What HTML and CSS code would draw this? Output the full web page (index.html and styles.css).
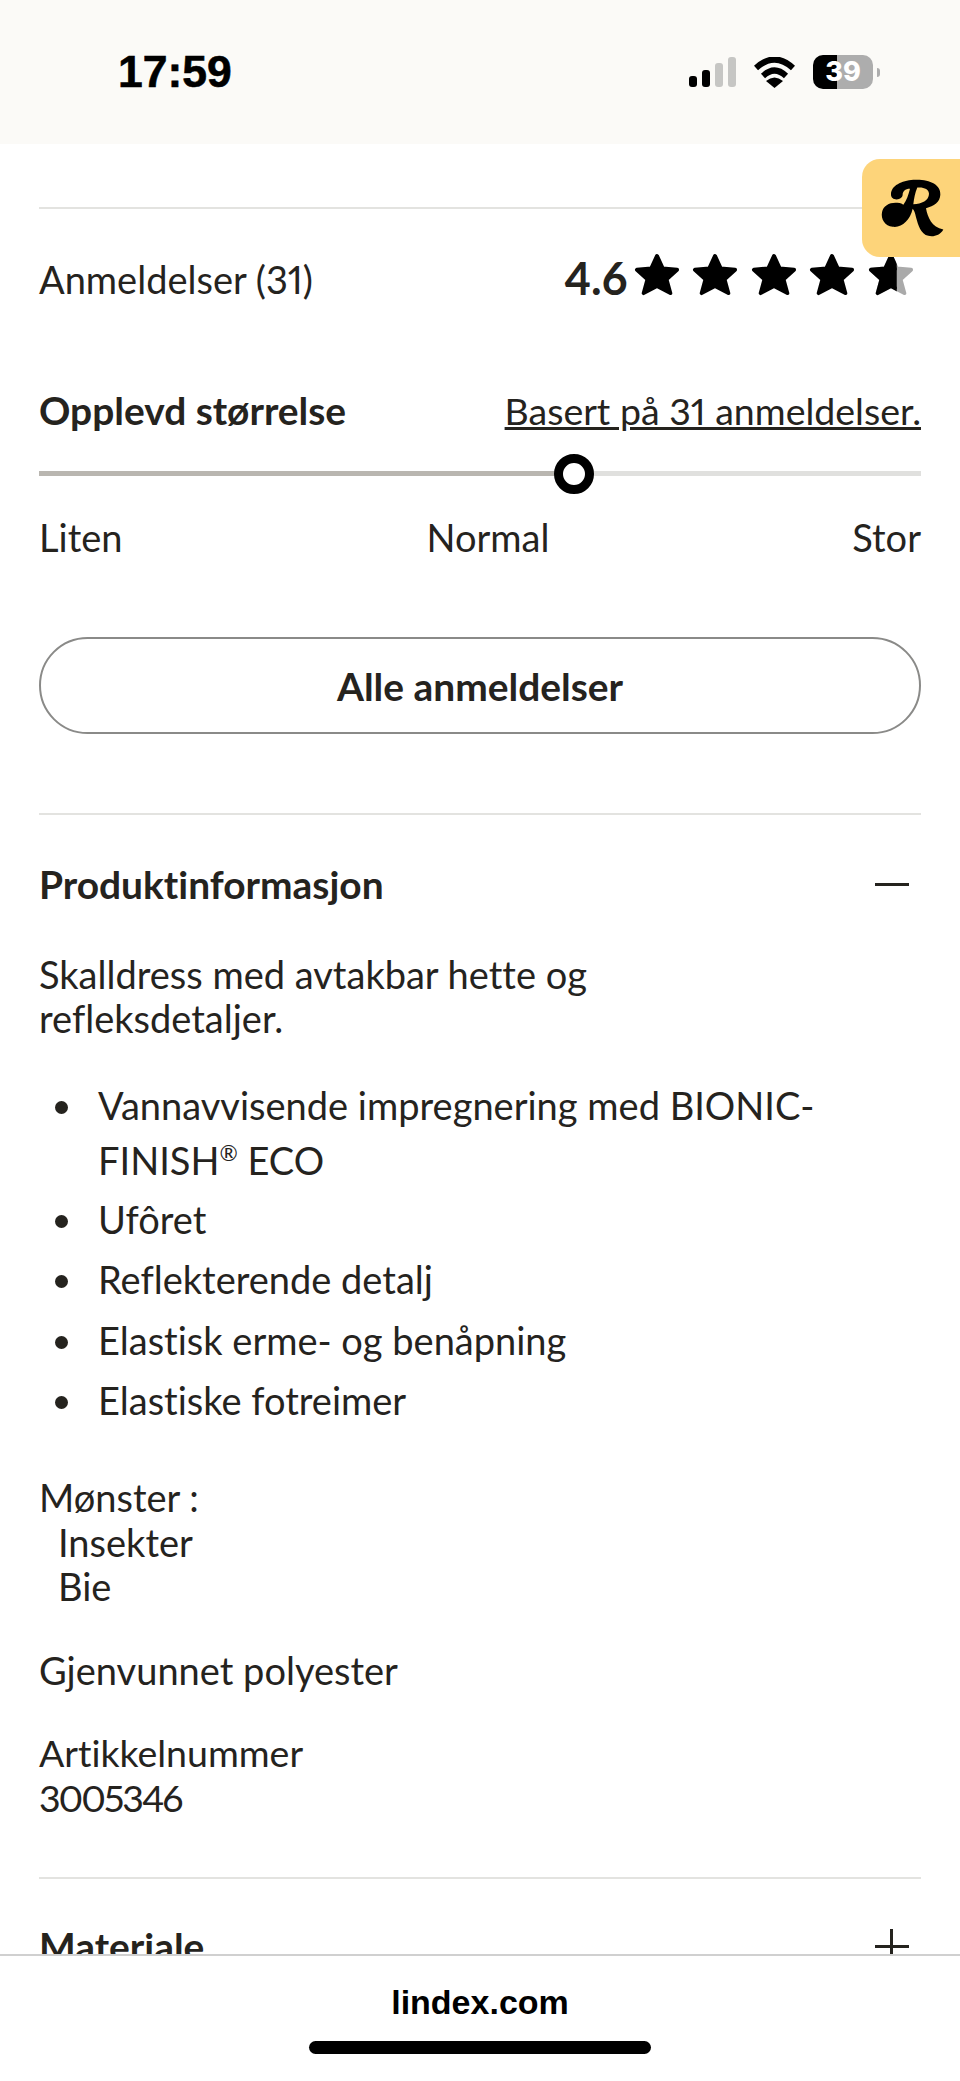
FILE: index.html
```html
<!DOCTYPE html>
<html lang="no">
<head>
    <meta charset="UTF-8">
    <meta name="viewport" content="width=device-width, initial-scale=1.0">
    <title>Lindex - Produkt</title>
    <link rel="stylesheet" href="styles.css">
</head>
<body>
    <header class="status-bar">
        <span class="clock">17:59</span>
        <div class="status-icons">
            <svg class="signal" width="47" height="30" viewBox="0 0 47 30">
                <rect x="0" y="19" width="8" height="11" rx="3" fill="#000"/>
                <rect x="13" y="13" width="8" height="17" rx="3" fill="#000"/>
                <rect x="26" y="6" width="8" height="24" rx="3" fill="#c6c6c4"/>
                <rect x="39" y="0" width="8" height="30" rx="3" fill="#c6c6c4"/>
            </svg>
            <svg class="wifi" width="41" height="31" viewBox="0 0 41 31">
                <path d="M2 11 Q20.5 -6 39 11" fill="none" stroke="#000" stroke-width="6"/>
                <path d="M9 19 Q20.5 8 32 19" fill="none" stroke="#000" stroke-width="6"/>
                <path d="M20.5 31 L12 24 Q20.5 17 29 24 Z" fill="#000"/>
            </svg>
            <div class="battery">
                <span class="battery-level">39</span>
            </div>
            <span class="battery-tip"></span>
        </div>
    </header>

    <a class="reviews-badge" href="#">
        <svg width="65" height="62" viewBox="60 65 195 185">
            <path fill-rule="evenodd" d="M93 118 C93 90 125 76 160 73 C205 70 243 85 241 118 C240 140 222 152 198 158 C203 185 215 215 250 222 C240 240 220 245 205 241 C182 235 175 210 168 185 C165 172 163 165 158 160 C150 195 125 218 98 214 C75 212 62 190 66 170 C70 150 90 140 112 142 C122 142 128 146 130 148 C140 135 145 118 150 100 C135 100 128 108 128 118 C128 125 120 132 110 132 C100 132 93 126 93 118 Z M172 96 C165 112 162 130 160 146 C185 146 207 135 207 115 C207 100 190 94 172 96 Z"/>
        </svg>
    </a>

    <svg class="defs" width="0" height="0">
        <defs>
            <symbol id="star" viewBox="0 0 50 46">
                <path d="M25 3 L31 16 L46 17.5 L35 27.5 L39 42 L25 34.5 L11 42 L15 27.5 L4 17.5 L19 16 Z" fill="currentColor" stroke="currentColor" stroke-width="4" stroke-linejoin="round"/>
            </symbol>
            <clipPath id="star-left"><rect x="0" y="0" width="31" height="46"/></clipPath>
        </defs>
    </svg>

    <main class="page">
        <section class="reviews">
            <div class="rating-row">
                <span class="rating-label">Anmeldelser (31)</span>
                <div class="rating">
                    <strong class="rating-value">4.6</strong>
                    <div class="stars">
                        <svg width="48" height="44"><use href="#star"/></svg>
                        <svg width="48" height="44"><use href="#star"/></svg>
                        <svg width="48" height="44"><use href="#star"/></svg>
                        <svg width="48" height="44"><use href="#star"/></svg>
                        <svg width="48" height="44" viewBox="0 0 50 46">
                            <use href="#star" class="star-empty"/>
                            <use href="#star" clip-path="url(#star-left)"/>
                        </svg>
                    </div>
                </div>
            </div>

            <div class="size-head">
                <h3>Opplevd størrelse</h3>
                <a href="#">Basert på 31 anmeldelser.</a>
            </div>
            <div class="size-track">
                <span class="size-fill"></span>
                <span class="size-knob"></span>
            </div>
            <div class="size-labels">
                <span>Liten</span>
                <span class="size-normal">Normal</span>
                <span>Stor</span>
            </div>

            <a class="all-reviews" href="#">Alle anmeldelser</a>
        </section>

        <section class="accordion">
            <div class="accordion-head">
                <h2>Produktinformasjon</h2>
                <span class="minus"></span>
            </div>
            <p class="intro">Skalldress med avtakbar hette og<br>refleksdetaljer.</p>
            <ul class="features">
                <li>Vannavvisende impregnering med BIONIC-FINISH<sup>®</sup> ECO</li>
                <li>Ufôret</li>
                <li>Reflekterende detalj</li>
                <li>Elastisk erme- og benåpning</li>
                <li>Elastiske fotreimer</li>
            </ul>
            <p class="pattern">Mønster :<br><span class="indent">Insekter</span><br><span class="indent">Bie</span></p>
            <p class="recycled">Gjenvunnet polyester</p>
            <p class="article">Artikkelnummer<br><span class="article-number">3005346</span></p>
        </section>

        <section class="accordion">
            <div class="accordion-head">
                <h2>Materiale</h2>
                <span class="plus"></span>
            </div>
        </section>
    </main>

    <footer class="url-bar">
        <span class="url">lindex.com</span>
        <span class="home-bar"></span>
    </footer>
</body>
</html>
```

FILE: styles.css
```css
/* General */
html, body {
    height: 2081px;
}

body {
    position: relative;
    margin: 0;
    overflow: hidden;
    background: #fff;
    color: #25231e;
    font-family: 'Lato', sans-serif;
    font-size: 38px;
    font-variant-ligatures: none;
    font-variant-numeric: proportional-nums;
    line-height: 44px;
}

a {
    color: inherit;
}

h2, h3, p, ul {
    margin: 0;
}

h2, h3 {
    font-size: 38.9px;
    font-weight: 700;
}

.defs {
    display: block;
}

/* Phone status bar */
.status-bar {
    display: flex;
    justify-content: space-between;
    align-items: center;
    box-sizing: border-box;
    height: 144px;
    padding: 0 80px 0 118px;
    background: #fbfaf7;
}

.clock {
    color: #000;
    font-family: 'Liberation Sans', sans-serif;
    font-size: 44.5px;
    font-weight: bold;
    -webkit-text-stroke: 0.6px #000;
}

.status-icons {
    display: flex;
    align-items: center;
}

.signal {
    margin-right: 18px;
}

.wifi {
    margin-right: 18px;
}

.battery {
    width: 60px;
    height: 34px;
    border-radius: 10px;
    background: linear-gradient(90deg, #000 0, #000 24px, #adadad 24px);
}

.battery-level {
    display: block;
    color: #fff;
    font-family: 'Inter', sans-serif;
    font-size: 27px;
    font-weight: 800;
    line-height: 34px;
    text-align: center;
}

.battery-tip {
    width: 3px;
    height: 9px;
    margin-left: 4px;
    border-radius: 0 3px 3px 0;
    background: #adadad;
}

/* Floating reviews tab */
.reviews-badge {
    position: absolute;
    top: 159px;
    right: 0;
    display: flex;
    align-items: center;
    box-sizing: border-box;
    width: 98px;
    height: 98px;
    padding-left: 18px;
    border-radius: 18px 0 0 18px;
    background: #fdd47a;
}

/* Content */
.page {
    padding: 63px 39px 0;
}

.reviews {
    border-top: 2px solid #e3e3e0;
}

.rating-row {
    display: flex;
    justify-content: space-between;
    align-items: center;
    height: 72px;
    margin-top: 33px;
    margin-right: 6px;
}

.rating-label {
    padding-top: 2px;
}

.rating {
    display: flex;
    align-items: center;
}

.rating-value {
    font-size: 45px;
    font-weight: 700;
}

.stars {
    display: flex;
    gap: 10.6px;
    margin-left: 5px;
    margin-top: -6px;
    color: #000;
}

.star-empty {
    color: #aaa;
}

.size-head {
    display: flex;
    justify-content: space-between;
    align-items: baseline;
    margin-top: 74px;
}

.size-head a {
    font-size: 37.5px;
}

.size-track {
    position: relative;
    height: 5px;
    margin-top: 38px;
    background: #e0e0de;
}

.size-fill {
    display: block;
    width: 521px;
    height: 5px;
    background: #b9b6b0;
}

.size-knob {
    position: absolute;
    top: -17px;
    left: 515px;
    box-sizing: border-box;
    width: 40px;
    height: 40px;
    border: 9px solid #000;
    border-radius: 50%;
    background: #fff;
}

.size-labels {
    display: grid;
    grid-template-columns: 1fr auto 1fr;
    margin-top: 39px;
}

.size-labels span:last-child {
    text-align: right;
}

.size-normal {
    padding-left: 16px;
}

.all-reviews {
    display: flex;
    justify-content: center;
    align-items: center;
    box-sizing: border-box;
    height: 97px;
    margin-top: 78px;
    border: 2px solid #8a8a88;
    border-radius: 49px;
    font-size: 38.9px;
    font-weight: 700;
    text-decoration: none;
}

/* Accordion sections */
.accordion {
    border-top: 2px solid #e3e3e0;
}

.reviews + .accordion {
    margin-top: 79px;
}

.accordion-head {
    display: flex;
    justify-content: space-between;
    align-items: center;
    height: 70px;
    padding-top: 34px;
}

.minus, .plus {
    position: relative;
    display: block;
    width: 34px;
    height: 3px;
    margin-right: 12px;
    background: #25231e;
}

.plus::after {
    content: "";
    position: absolute;
    top: -16px;
    left: 15px;
    width: 3px;
    height: 34px;
    background: #25231e;
}

.intro {
    margin-top: 33px;
}

.features {
    margin-top: 38px;
    padding-left: 48px;
    line-height: 55px;
}

.features li {
    margin-bottom: 5.5px;
    padding-left: 11px;
    padding-right: 90px;
}

.features li:first-child {
    margin-bottom: 3.5px;
}

.features sup {
    font-size: 22px;
    line-height: 0;
}

.pattern, .recycled, .article {
    line-height: 44.5px;
}

.pattern {
    margin-top: 47px;
}

.indent {
    margin-left: 19px;
}

.recycled, .article {
    margin-top: 39px;
}

.article {
    font-size: 37.5px;
}

.article-number {
    letter-spacing: -2px;
}

.accordion:last-child {
    margin-top: 57px;
}

.accordion:last-child .accordion-head {
    margin-top: -2px;
}

/* Browser url bar */
.url-bar {
    position: absolute;
    right: 0;
    bottom: 0;
    left: 0;
    display: flex;
    flex-direction: column;
    align-items: center;
    box-sizing: border-box;
    height: 127px;
    padding-top: 27px;
    border-top: 2px solid #d0d0d0;
    background: #fff;
}

.url {
    color: #000;
    font-family: 'Liberation Sans', sans-serif;
    font-size: 34px;
    font-weight: bold;
    line-height: 39px;
}

.home-bar {
    width: 342px;
    height: 13px;
    margin-top: 19px;
    border-radius: 7px;
    background: #000;
}
```
